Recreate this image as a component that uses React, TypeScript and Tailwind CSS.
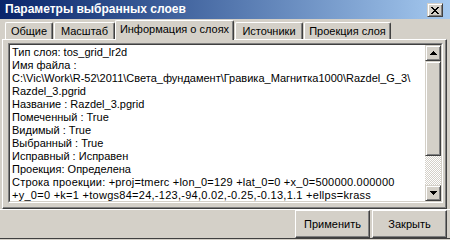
const lines = [
  "Тип слоя: tos_grid_lr2d",
  "Имя файла :",
  "C:\\Vic\\Work\\R-52\\2011\\Света_фундамент\\Гравика_Магнитка1000\\Razdel_G_3\\",
  "Razdel_3.pgrid",
  "Название : Razdel_3.pgrid",
  "Помеченный : True",
  "Видимый : True",
  "Выбранный : True",
  "Исправный : Исправен",
  "Проекция: Определена",
];

const tabBase =
  "flex items-center justify-center border-l border-t border-r border-l-white border-t-white border-r-[#404040] rounded-t-[2px] shadow-[inset_-1px_0_0_#808080]";

const Arrow = ({ down }: { down?: boolean }) => (
  <svg width="7" height="4" viewBox="0 0 7 4" shapeRendering="crispEdges" className={down ? "rotate-180" : ""}>
    <rect x="3" y="0" width="1" height="1" fill="#000" />
    <rect x="2" y="1" width="3" height="1" fill="#000" />
    <rect x="1" y="2" width="5" height="1" fill="#000" />
    <rect x="0" y="3" width="7" height="1" fill="#000" />
  </svg>
);

const raised =
  "border border-t-[#d4d0c8] border-l-[#d4d0c8] border-r-[#404040] border-b-[#404040] shadow-[inset_1px_1px_0_#ffffff,inset_-1px_-1px_0_#808080] bg-[#d4d0c8]";

export default function App() {
  return (
    <div className="w-[450px] h-[240px] overflow-hidden bg-[#d4d0c8] flex flex-col font-['Liberation_Sans',Arial,sans-serif] text-[11px] text-black select-none">
      {/* title bar */}
      <div className="h-[19px] shrink-0 flex items-start bg-gradient-to-r from-[#0a246a] to-[#a6caf0] pl-[5px] pr-[7px]">
        <span className="mt-[3px] text-white font-bold text-[12px] leading-[13px]">Параметры выбранных слоев</span>
        <div className={`ml-auto mt-[3px] w-[16px] h-[14px] flex items-center justify-center ${raised}`}>
          <svg width="8" height="7" viewBox="0 0 8 7" shapeRendering="crispEdges">
            <path d="M0 0h2v1h-2zM6 0h2v1h-2zM1 1h2v1h-2zM5 1h2v1h-2zM2 2h4v1h-4zM3 3h2v1h-2zM2 4h4v1h-4zM1 5h2v1h-2zM5 5h2v1h-2zM0 6h2v1h-2zM6 6h2v1h-2z" fill="#000" />
          </svg>
        </div>
      </div>

      {/* tabs */}
      <div className="h-[20px] shrink-0 flex items-end pl-[5px] relative z-10">
        <div className={`${tabBase} w-[48px] h-[17px]`}>Общие</div>
        <div className={`${tabBase} ml-px w-[61px] h-[17px]`}>Масштаб</div>
        <div className={`${tabBase} w-[119px] h-[20px] -mb-px bg-[#d4d0c8] pb-[2px]`}>Информация о слоях</div>
        <div className={`${tabBase} ml-px w-[68px] h-[17px]`}>Источники</div>
        <div className={`${tabBase} ml-px w-[87px] h-[17px]`}>Проекция слоя</div>
      </div>

      {/* tab panel */}
      <div className="ml-[2px] w-[445px] h-[170px] shrink-0 border border-t-white border-l-white border-r-[#404040] border-b-[#404040] shadow-[inset_-1px_-1px_0_#808080] pt-[3px] pl-[5px] pr-[3px] pb-[5px]">
        <div className="h-full flex border border-t-[#808080] border-l-[#808080] border-r-white border-b-white">
          <div className="flex-1 flex border border-t-[#404040] border-l-[#404040] border-r-[#d4d0c8] border-b-[#d4d0c8] bg-white">
            <div className="flex-1 overflow-hidden pt-[1px] pl-[2px] leading-[13px]">
              {lines.map((l, i) => (
                <div key={i} className="whitespace-nowrap">
                  {l}
                </div>
              ))}
              <div className="whitespace-nowrap tracking-[0.2px]">
                Строка проекции: +proj=tmerc +lon_0=129 +lat_0=0 +x_0=500000.000000
              </div>
              <div className="whitespace-nowrap tracking-[0.27px]">
                +y_0=0 +k=1 +towgs84=24,-123,-94,0.02,-0.25,-0.13,1.1 +ellps=krass
              </div>
            </div>
            <div className="w-[16px] flex flex-col">
              <div className={`h-[16px] flex items-center justify-center ${raised}`}>
                <Arrow />
              </div>
              <div className={`h-[95px] ${raised}`} />
              <div className="flex-1 bg-[repeating-conic-gradient(#ffffff_0%_25%,#d4d0c8_0%_50%)] bg-[length:2px_2px]" />
              <div className={`h-[16px] flex items-center justify-center ${raised}`}>
                <Arrow down />
              </div>
            </div>
          </div>
        </div>
      </div>

      {/* buttons */}
      <div className="h-[30px] shrink-0 flex justify-end gap-[2px] pr-[3px] border-t border-t-white border-b border-b-[#404040]">
        <button className="w-[75px] h-full border border-t-white border-l-white border-r-[#404040] border-b-[#404040] shadow-[inset_-1px_-1px_0_#808080] text-[11px]">
          Применить
        </button>
        <button className="w-[75px] h-full border border-t-white border-l-white border-r-[#404040] border-b-[#404040] shadow-[inset_-1px_-1px_0_#808080] text-[11px]">
          Закрыть
        </button>
      </div>
    </div>
  );
}
